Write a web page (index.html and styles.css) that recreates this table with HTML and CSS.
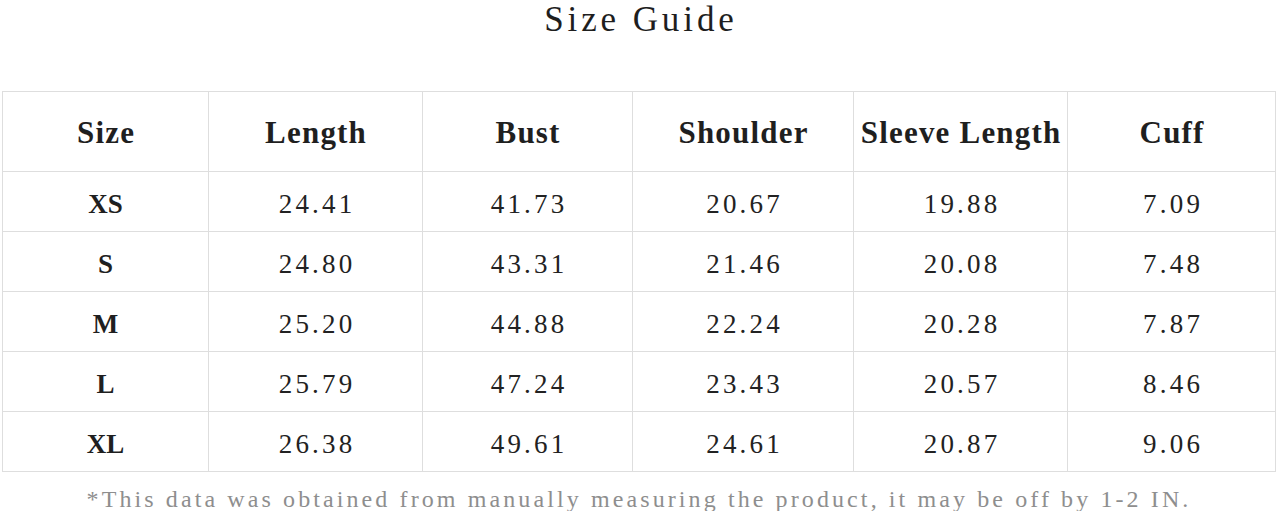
FILE: index.html
```html
<!DOCTYPE html>
<html lang="en">
<head>
<meta charset="utf-8">
<title>Size Guide</title>
<link rel="stylesheet" href="styles.css">
</head>
<body>
  <h1 class="title">Size Guide</h1>
  <div class="size-table">
    <div class="cell head">Size</div>
    <div class="cell head">Length</div>
    <div class="cell head">Bust</div>
    <div class="cell head">Shoulder</div>
    <div class="cell head">Sleeve Length</div>
    <div class="cell head">Cuff</div>

    <div class="cell size">XS</div>
    <div class="cell num">24.41</div>
    <div class="cell num">41.73</div>
    <div class="cell num">20.67</div>
    <div class="cell num">19.88</div>
    <div class="cell num">7.09</div>

    <div class="cell size">S</div>
    <div class="cell num">24.80</div>
    <div class="cell num">43.31</div>
    <div class="cell num">21.46</div>
    <div class="cell num">20.08</div>
    <div class="cell num">7.48</div>

    <div class="cell size">M</div>
    <div class="cell num">25.20</div>
    <div class="cell num">44.88</div>
    <div class="cell num">22.24</div>
    <div class="cell num">20.28</div>
    <div class="cell num">7.87</div>

    <div class="cell size">L</div>
    <div class="cell num">25.79</div>
    <div class="cell num">47.24</div>
    <div class="cell num">23.43</div>
    <div class="cell num">20.57</div>
    <div class="cell num">8.46</div>

    <div class="cell size">XL</div>
    <div class="cell num">26.38</div>
    <div class="cell num">49.61</div>
    <div class="cell num">24.61</div>
    <div class="cell num">20.87</div>
    <div class="cell num">9.06</div>
  </div>
  <p class="note">*This data was obtained from manually measuring the product, it may be off by 1-2 IN.</p>
</body>
</html>
```

FILE: styles.css
```css
* {
  box-sizing: border-box;
}

html, body {
  margin: 0;
  padding: 0;
  background: #ffffff;
}

body {
  font-family: "Liberation Serif", "Times New Roman", serif;
  color: #1a1a1a;
}

.title {
  margin: 0 0 52px 0;
  font-size: 35px;
  line-height: 39px;
  font-weight: normal;
  letter-spacing: 3.9px;
  padding-left: 3.9px;
  text-align: center;
  color: #1e1e1e;
}

.size-table {
  display: grid;
  grid-template-columns: 206px 214px 210px 221px 214px 208px;
  grid-template-rows: 80px repeat(5, 60px);
  margin: 0 2px;
  border-right: 1px solid #dedede;
  border-bottom: 1px solid #dedede;
}

.cell {
  display: flex;
  align-items: center;
  justify-content: center;
  border-left: 1px solid #dedede;
  border-top: 1px solid #dedede;
  line-height: 1;
  white-space: nowrap;
}

.head {
  font-size: 31px;
  font-weight: bold;
  letter-spacing: 1.2px;
  padding-left: 1.2px;
  padding-top: 2px;
  color: #1f1f1f;
}

.size {
  font-size: 27px;
  font-weight: bold;
  padding-top: 5px;
  color: #1f1f1f;
}

.num {
  font-size: 27px;
  letter-spacing: 3.2px;
  padding-left: 3.2px;
  padding-top: 5px;
  color: #222222;
}

.note {
  margin: 15px 0 0 0;
  font-size: 24px;
  line-height: 1;
  letter-spacing: 3.1px;
  text-align: center;
  color: #8e8e8e;
  white-space: nowrap;
}
```
